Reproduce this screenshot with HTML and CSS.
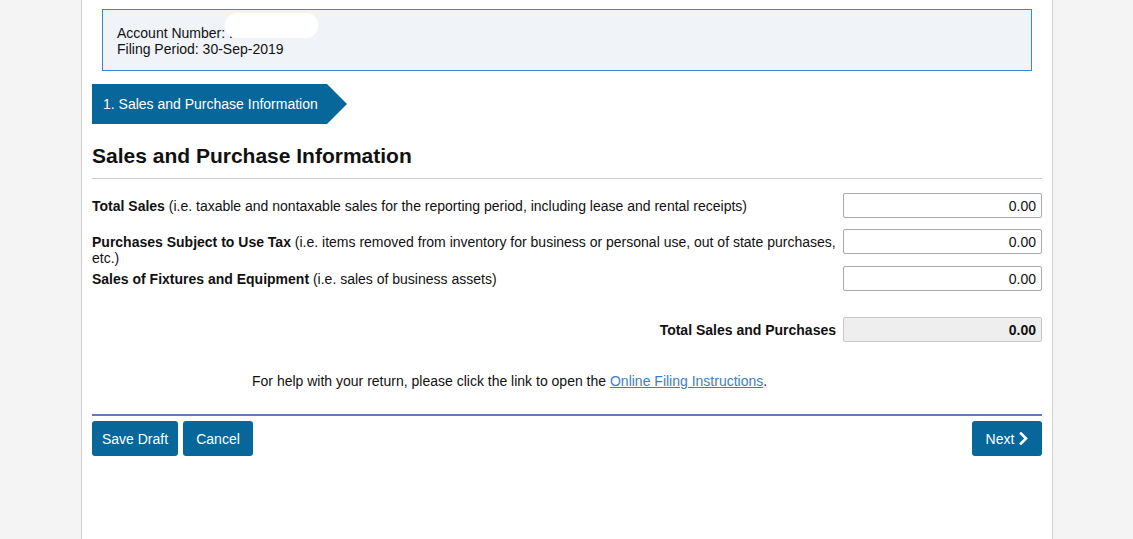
FILE: index.html
```html
<!DOCTYPE html>
<html>
<head>
<meta charset="utf-8">
<link rel="stylesheet" href="styles.css">
</head>
<body>
<div class="page">
  <div class="info">
    <div class="info-line">Account Number: .</div>
    <div class="info-line">Filing Period: 30-Sep-2019</div>
    <span class="redact"></span>
  </div>
  <div class="step">1. Sales and Purchase Information</div>
  <h2 class="title">Sales and Purchase Information</h2>
  <div class="rows">
    <div class="row">
      <div class="label"><b>Total Sales</b> (i.e. taxable and nontaxable sales for the reporting period, including lease and rental receipts)</div>
      <input class="field" type="text" value="0.00">
    </div>
    <div class="row">
      <div class="label"><b>Purchases Subject to Use Tax</b> (i.e. items removed from inventory for business or personal use, out of state purchases, etc.)</div>
      <input class="field" type="text" value="0.00">
    </div>
    <div class="row">
      <div class="label"><b>Sales of Fixtures and Equipment</b> (i.e. sales of business assets)</div>
      <input class="field" type="text" value="0.00">
    </div>
    <div class="row total">
      <div class="label total-label">Total Sales and Purchases</div>
      <input class="field total-field" type="text" value="0.00" readonly>
    </div>
  </div>
  <p class="help">For help with your return, please click the link to open the <a href="#">Online Filing Instructions</a>.</p>
  <div class="actions">
    <div class="left-actions">
      <button class="btn btn-save">Save Draft</button>
      <button class="btn btn-cancel">Cancel</button>
    </div>
    <button class="btn btn-next">Next <svg class="chev" width="9" height="13" viewBox="0 0 9 13"><path d="M2 1.5 L7 6.5 L2 11.5" fill="none" stroke="#fff" stroke-width="2.6" stroke-linecap="square"/></svg></button>
  </div>
</div>
</body>
</html>
```
FILE: styles.css
```css
html, body {
  margin: 0;
  padding: 0;
  background: #f4f4f4;
  font-family: "Liberation Sans", Arial, sans-serif;
  font-size: 14px;
  color: #111;
}
.page {
  margin-left: 81px;
  width: 950px;
  padding: 0 10px;
  min-height: 539px;
  background: #fff;
  border-left: 1px solid #cfcfcf;
  border-right: 1px solid #cfcfcf;
  box-sizing: content-box;
  overflow: hidden;
}
.info {
  position: relative;
  margin: 9px 10px 0 10px;
  height: 60px;
  box-sizing: content-box;
  border: 1px solid #3b87c9;
  background: #f0f4f9;
  padding: 0 14px;
}
.info-line {
  line-height: 16px;
  height: 16px;
}
.info-line:first-child {
  margin-top: 15px;
}
.redact {
  position: absolute;
  left: 122px;
  top: 3px;
  width: 93px;
  height: 25px;
  background: #fff;
  border-radius: 12px;
}
.step {
  margin-top: 13px;
  width: 255px;
  height: 40px;
  line-height: 40px;
  padding-left: 11px;
  box-sizing: border-box;
  background: #07679a;
  color: #fff;
  clip-path: polygon(0 0, 235px 0, 100% 50%, 235px 100%, 0 100%);
}
.title {
  margin: 20px 0 0 0;
  font-size: 21px;
  line-height: 24px;
  font-weight: bold;
  padding-bottom: 10px;
  border-bottom: 1px solid #cccccc;
}
.rows {
  margin-top: 14px;
}
.row {
  display: flex;
  align-items: flex-start;
  gap: 7px;
}
.label {
  flex: 1;
  padding-top: 5px;
  line-height: 16px;
}
.field {
  width: 199px;
  height: 25px;
  box-sizing: border-box;
  margin: 0 0 11px 0;
  border: 1px solid #a9a9a9;
  border-radius: 2px;
  padding: 0 5px;
  text-align: right;
  font-family: "Liberation Sans", Arial, sans-serif;
  font-size: 14px;
  color: #111;
  background: #fff;
  outline: none;
}
.total {
  margin-top: 15px;
}
.total-label {
  text-align: right;
  font-weight: bold;
}
.total-field {
  background: #eeeeee;
  border-color: #c8c8c8;
  font-weight: bold;
}
.help {
  margin: 20px 0 0 0;
  padding-left: 160px;
  line-height: 16px;
}
.help a {
  color: #3c7fc3;
  text-decoration: underline;
}
.actions {
  margin-top: 25px;
  border-top: 2px solid #5e7cbf;
  padding-top: 5px;
  display: flex;
  justify-content: space-between;
}
.left-actions {
  display: flex;
  gap: 5px;
}
.btn {
  height: 35px;
  border: none;
  border-radius: 3px;
  background: #07679a;
  color: #fff;
  font-family: "Liberation Sans", Arial, sans-serif;
  font-size: 14px;
  padding: 0;
  display: flex;
  align-items: center;
  justify-content: center;
  gap: 5px;
}
.btn-save { width: 86px; }
.btn-cancel { width: 70px; }
.btn-next { width: 70px; }
.chev { display: block; }
```
